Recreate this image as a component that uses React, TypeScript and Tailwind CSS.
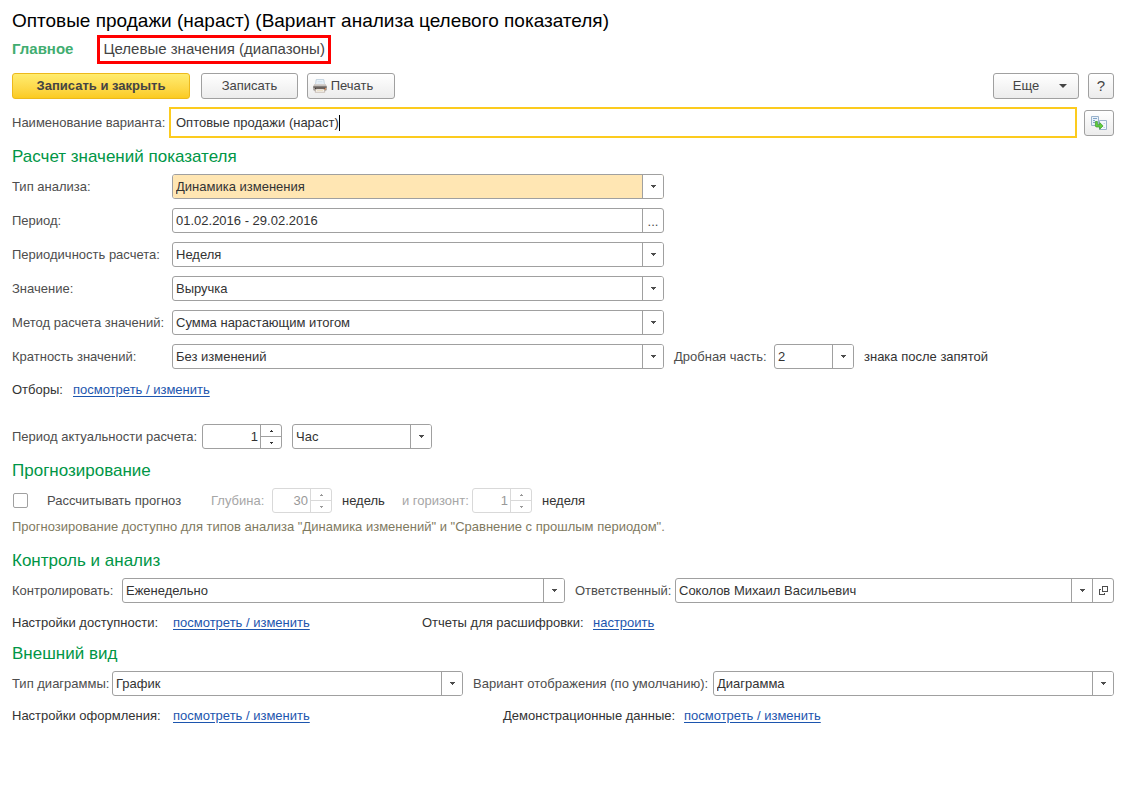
import { useState } from "react";
import type { ReactNode } from "react";
import clsx from "clsx";

const buttonBase =
  "flex h-[26px] items-center justify-center rounded-[3px] border border-[#a0a0a0] bg-linear-to-b from-white to-[#ececec] text-[#444444]";

function Arrow({ up = false, small = false }: { up?: boolean; small?: boolean }) {
  return (
    <svg
      className={clsx(up && "rotate-180")}
      width={small ? 3 : 5}
      height={small ? 2 : 3}
      viewBox={small ? "0 0 3 2" : "0 0 5 3"}
      shapeRendering="crispEdges"
      fill="currentColor"
    >
      {small ? (
        <path d="M0 0h3v1H0zM1 1h1v1H1z" />
      ) : (
        <path d="M0 0h5v1H0zM1 1h3v1H1zM2 2h1v1H2z" />
      )}
    </svg>
  );
}

function PrinterIcon() {
  return (
    <svg width="14" height="14" viewBox="0 0 14 14">
      <path d="M3.2 .6h7.600l.6 5H2.600z" fill="#eef5fb" stroke="#b4c6d6" strokeWidth=".8" />
      <path d="M4.500 2.500h5M4.300 4h5.400" stroke="#cfe0ee" strokeWidth=".8" />
      <path d="M2 5h10l1.800 2.300v3.700l-1 .7H1.200l-1-.7V7.300z" fill="#a39d99" />
      <path d="M2 5h10l1.200 1.800H.8z" fill="#d3cfcc" />
      <path d="M.4 7.500h13.200v1.300H.4z" fill="#6b6461" />
      <path d="M2 8.800h10v1.400H2z" fill="#3c3633" />
      <path d="M3 10h8l.9 3.200H2.100z" fill="#fffdf8" stroke="#b9aca2" strokeWidth=".8" />
      <path d="M3.800 11.600h6.400" stroke="#e5d3b4" strokeWidth=".8" />
      <path d="M11.500 9.200h1.500v1.300h-1.500z" fill="#e4884f" />
    </svg>
  );
}

function TransferIcon() {
  return (
    <svg width="16" height="14" viewBox="0 0 16 14">
      <path d="M.5.5h7v9h-7z" fill="#eaf2fa" stroke="#9ab3cc" />
      <path d="M2 2.500h4M2 4.500h2M2 6.500h2" stroke="#7fa3c8" />
      <path d="M8.500 4.500h7v9h-7z" fill="#f3f8fd" stroke="#9ab3cc" />
      <path d="M12.500 7.500H14M12.500 11.500H14" stroke="#c2d5e8" />
      <path
        d="M4.400 5.500h2v3.300h2.300V6.600l3.400 3.300-3.400 3.300V11H5.700c-.9 0-1.300-.5-1.300-1.300z"
        fill="#62cf3e"
        stroke="#37982a"
        strokeWidth=".7"
      />
    </svg>
  );
}

function OpenIcon() {
  return (
    <svg width="9" height="9" viewBox="0 0 9 9" fill="none" stroke="currentColor" shapeRendering="crispEdges">
      <path d="M3.500.5h5v5h-5z" />
      <path d="M2 3.500H.5v5h5V7" />
    </svg>
  );
}

function Label({ id, className, children }: { id: string; className?: string; children: ReactNode }) {
  return (
    <label htmlFor={id} className={clsx("shrink-0 whitespace-nowrap", className ?? "w-[160px]")}>
      {children}
    </label>
  );
}

type SelectFieldProps = {
  id: string;
  value: string;
  className?: string;
  highlighted?: boolean;
  onOpen?: () => void;
};

function SelectField({ id, value, className = "flex-1", highlighted, onOpen }: SelectFieldProps) {
  return (
    <div
      className={clsx(
        "flex h-[25px] min-w-0 overflow-hidden rounded-[3px] border border-[#a0a0a0] bg-white",
        className,
      )}
    >
      <div className="relative min-w-0 flex-1">
        <select
          id={id}
          defaultValue={value}
          className={clsx(
            "h-full w-full appearance-none pr-6 pl-[3px] text-[#333333] outline-none",
            highlighted && "bg-[#ffe6b3]",
          )}
        >
          <option>{value}</option>
        </select>
        <span className="pointer-events-none absolute inset-y-0 right-0 flex w-[21px] items-center justify-center border-l border-[#a0a0a0] bg-white">
          <Arrow />
        </span>
      </div>
      {onOpen && (
        <button
          type="button"
          aria-label="Открыть"
          onClick={onOpen}
          className="flex w-[21px] items-center justify-center border-l border-[#a0a0a0]"
        >
          <OpenIcon />
        </button>
      )}
    </div>
  );
}

type SpinFieldProps = {
  id: string;
  initial: number;
  className: string;
  disabled?: boolean;
};

function SpinField({ id, initial, className, disabled }: SpinFieldProps) {
  const [value, setValue] = useState(initial);
  const border = disabled ? "border-[#d9d9d9]" : "border-[#a0a0a0]";

  return (
    <div
      className={clsx(
        "flex h-[25px] shrink-0 overflow-hidden rounded-[3px] border bg-white",
        border,
        disabled ? "text-[#999999]" : "text-[#333333]",
        className,
      )}
    >
      <input
        id={id}
        inputMode="numeric"
        disabled={disabled}
        value={value}
        onChange={(e) => setValue(Number(e.target.value) || 0)}
        className="min-w-0 flex-1 pr-[2px] text-right outline-none"
      />
      <div className={clsx("flex w-[21px] flex-col border-l", border)}>
        <button
          type="button"
          aria-label="Увеличить"
          disabled={disabled}
          onClick={() => setValue(value + 1)}
          className={clsx("flex flex-1 items-center justify-center border-b", border)}
        >
          <Arrow up small />
        </button>
        <button
          type="button"
          aria-label="Уменьшить"
          disabled={disabled}
          onClick={() => setValue(value - 1)}
          className="flex flex-1 items-center justify-center"
        >
          <Arrow small />
        </button>
      </div>
    </div>
  );
}

function Heading({ children }: { children: ReactNode }) {
  return <h2 className="mb-[7px] text-[17px] leading-5 text-[#009646]">{children}</h2>;
}

function LinkRow({ label, link, className }: { label: string; link: string; className: string }) {
  return (
    <p className="flex text-[#333333]">
      <span className={clsx("shrink-0", className)}>{label}</span>
      <a href="#" className="text-[#1c55ae] underline underline-offset-2">
        {link}
      </a>
    </p>
  );
}

const fields = [
  { id: "interval", label: "Периодичность расчета:", value: "Неделя" },
  { id: "measure", label: "Значение:", value: "Выручка" },
  { id: "method", label: "Метод расчета значений:", value: "Сумма нарастающим итогом" },
];

export default function App() {
  const [name, setName] = useState("Оптовые продажи (нараст)");

  return (
    <main className="min-h-screen bg-white pt-[10px] pr-[17px] pb-8 pl-3 font-['Liberation_Sans',Arial,sans-serif] text-[13px] leading-5 text-[#4d4d4d]">
      <h1 className="text-[19px] leading-[22px] text-black">
        Оптовые продажи (нараст) (Вариант анализа целевого показателя)
      </h1>

      <nav className="mt-[3px] flex h-[29px] items-stretch gap-6 text-[15px]">
        <a href="#" className="flex items-center pb-[2px] font-bold text-[#41ad70]">
          Главное
        </a>
        <a href="#" className="flex items-center border-3 border-[#ff0000] px-[3px] pb-[2px] text-[#444444]">
          Целевые значения (диапазоны)
        </a>
      </nav>

      <div className="mt-[9px] flex">
        <button
          type="button"
          className="h-[26px] w-[178px] rounded-[3px] border border-[#edb91c] bg-linear-to-b from-[#ffec6e] to-[#fbcb1e] font-bold text-[#444444]"
        >
          Записать и закрыть
        </button>
        <button type="button" className={clsx(buttonBase, "ml-[11px] w-[97px]")}>
          Записать
        </button>
        <button type="button" className={clsx(buttonBase, "ml-[9px] w-[88px] gap-1 pr-4")}>
          <PrinterIcon />
          Печать
        </button>
        <button type="button" className={clsx(buttonBase, "ml-auto w-[86px] gap-5 pl-2")}>
          Еще
          <svg width="8" height="4" viewBox="0 0 8 4" fill="#444444">
            <path d="M0 0h8L4 4z" />
          </svg>
        </button>
        <button type="button" className={clsx(buttonBase, "ml-[9px] w-[26px] text-[15px]")}>
          ?
        </button>
      </div>

      <div className="mt-2 flex items-center">
        <Label id="name" className="w-[157px]">
          Наименование варианта:
        </Label>
        <div className="relative h-[31px] min-w-0 flex-1 border-2 border-[#fccb1e]">
          <input
            id="name"
            value={name}
            onChange={(e) => setName(e.target.value)}
            className="h-full w-full px-[5px] text-[#333333] caret-transparent outline-none"
          />
          <span className="pointer-events-none absolute inset-y-0 left-[5px] flex items-center">
            <span className="invisible whitespace-pre">{name}</span>
            <span className="h-4 w-px bg-black" />
          </span>
        </div>
        <button type="button" aria-label="Перенести" className={clsx(buttonBase, "ml-[7px] w-[30px]")}>
          <TransferIcon />
        </button>
      </div>

      <section className="mt-[9px]">
        <Heading>Расчет значений показателя</Heading>
        <div className="flex flex-col gap-[9px]">
          <div className="flex w-[652px] max-w-full items-center">
            <Label id="kind">Тип анализа:</Label>
            <SelectField id="kind" value="Динамика изменения" highlighted />
          </div>
          <div className="flex w-[652px] max-w-full items-center">
            <Label id="period">Период:</Label>
            <div className="flex h-[25px] min-w-0 flex-1 rounded-[3px] border border-[#a0a0a0]">
              <input
                id="period"
                defaultValue="01.02.2016 - 29.02.2016"
                className="min-w-0 flex-1 pl-[3px] text-[#333333] outline-none"
              />
              <button
                type="button"
                aria-label="Выбрать период"
                className="flex w-[21px] items-end justify-center border-l border-[#a0a0a0]"
              >
                ...
              </button>
            </div>
          </div>
          {fields.map((field) => (
            <div key={field.id} className="flex w-[652px] max-w-full items-center">
              <Label id={field.id}>{field.label}</Label>
              <SelectField id={field.id} value={field.value} />
            </div>
          ))}
          <div className="flex items-center gap-[10px]">
            <div className="flex w-[652px] min-w-0 items-center">
              <Label id="scale">Кратность значений:</Label>
              <SelectField id="scale" value="Без изменений" />
            </div>
            <div className="flex items-center">
              <Label id="fraction" className="w-[100px]">
                Дробная часть:
              </Label>
              <SelectField id="fraction" value="2" className="w-20" />
            </div>
            <span className="whitespace-nowrap text-[#333333]">знака после запятой</span>
          </div>
        </div>
        <div className="mt-[11px]">
          <LinkRow label="Отборы:" link="посмотреть / изменить" className="w-[61px]" />
        </div>

        <div className="mt-6 flex items-center">
          <Label id="actual" className="w-[190px]">
            Период актуальности расчета:
          </Label>
          <SpinField id="actual" initial={1} className="mr-[10px] w-20" />
          <SelectField id="unit" value="Час" className="w-[140px]" />
        </div>
      </section>

      <section className="mt-3">
        <Heading>Прогнозирование</Heading>
        <div className="flex h-[25px] items-center">
          <input
            id="forecast"
            type="checkbox"
            className="ml-px size-[15px] appearance-none rounded-xs border border-[#a0a0a0] checked:bg-[#a0a0a0]"
          />
          <Label id="forecast" className="ml-[19px] w-[164px]">
            Рассчитывать прогноз
          </Label>
          <Label id="depth" className="w-[61px] text-[#a6a6a6]">
            Глубина:
          </Label>
          <SpinField id="depth" initial={30} className="w-[60px]" disabled />
          <span className="ml-[10px] w-[60px] text-[#333333]">недель</span>
          <Label id="horizon" className="w-[70px] text-[#a6a6a6]">
            и горизонт:
          </Label>
          <SpinField id="horizon" initial={1} className="w-[60px]" disabled />
          <span className="ml-[10px] text-[#333333]">неделя</span>
        </div>
        <p className="mt-1 text-[#7f7a5f]">
          Прогнозирование доступно для типов анализа "Динамика изменений" и "Сравнение с прошлым периодом".
        </p>
      </section>

      <section className="mt-[14px]">
        <Heading>Контроль и анализ</Heading>
        <div className="grid grid-cols-[553fr_539fr] gap-[10px]">
          <div className="flex items-center">
            <Label id="control" className="w-[110px]">
              Контролировать:
            </Label>
            <SelectField id="control" value="Еженедельно" />
          </div>
          <div className="flex items-center">
            <Label id="owner" className="w-[100px]">
              Ответственный:
            </Label>
            <SelectField id="owner" value="Соколов Михаил Васильевич" onOpen={() => {}} />
          </div>
        </div>
        <div className="mt-[10px] grid grid-cols-[410fr_692fr]">
          <LinkRow label="Настройки доступности:" link="посмотреть / изменить" className="w-[161px]" />
          <LinkRow label="Отчеты для расшифровки:" link="настроить" className="w-[171px]" />
        </div>
      </section>

      <section className="mt-[11px]">
        <Heading>Внешний вид</Heading>
        <div className="grid grid-cols-[451fr_641fr] gap-[10px]">
          <div className="flex items-center">
            <Label id="chart" className="w-[100px]">
              Тип диаграммы:
            </Label>
            <SelectField id="chart" value="График" />
          </div>
          <div className="flex items-center">
            <Label id="view" className="w-[240px]">
              Вариант отображения (по умолчанию):
            </Label>
            <SelectField id="view" value="Диаграмма" />
          </div>
        </div>
        <div className="mt-[10px] grid grid-cols-[491fr_611fr]">
          <LinkRow label="Настройки оформления:" link="посмотреть / изменить" className="w-[161px]" />
          <LinkRow label="Демонстрационные данные:" link="посмотреть / изменить" className="w-[181px]" />
        </div>
      </section>
    </main>
  );
}
